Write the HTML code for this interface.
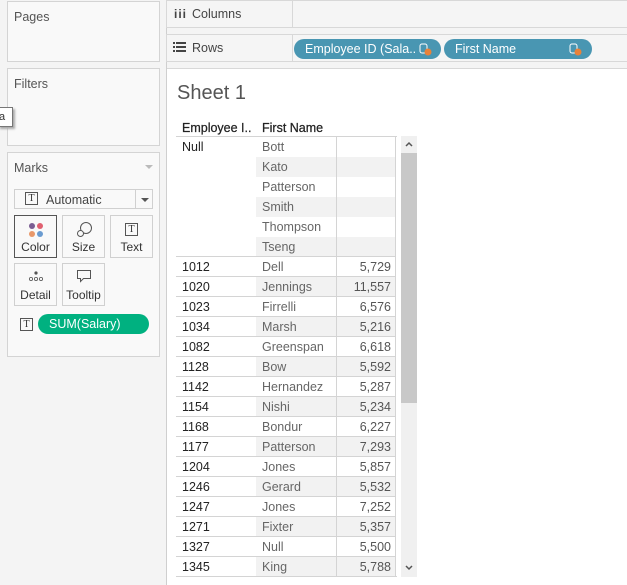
<!DOCTYPE html>
<html><head><style>
*{margin:0;padding:0;box-sizing:border-box}
body{width:627px;height:585px;background:#f4f4f4;font-family:"Liberation Sans",sans-serif;font-size:12px;color:#333;position:relative;overflow:hidden}
.abs{position:absolute}
.panel{position:absolute;left:7px;width:153px;background:#f9f9f9;border:1px solid #d4d4d4}
.ptitle{position:absolute;left:6px;top:8px;font-size:12.5px;color:#555}
.shelf{position:absolute;left:166px;width:461px;height:28px;background:#f5f5f5;border:1px solid #d8d8d8;border-right:none}
.shelf .sep{position:absolute;left:125px;top:0;bottom:0;border-left:1px solid #d8d8d8}
.pill{position:absolute;top:4px;height:20px;border-radius:10px;background:#4996b2;color:#fff;font-size:12.5px;line-height:20px;padding-left:11px}
.btn{position:absolute;width:43px;height:43px;border:1px solid #d0d0d0;background:#f9f9f9;text-align:center;font-size:12px;color:#333}
.btn .lbl{position:absolute;left:0;right:0;bottom:3px}
.ticon{display:inline-block;width:13px;height:13px;border:1px solid #555;font-size:10px;line-height:11px;text-align:center;font-family:"Liberation Serif",serif;color:#333}
.row{position:absolute;left:176px;width:220px;height:20px;font-size:12.5px}
.row div{position:absolute;top:0;height:20px;line-height:20px}
.c1{left:6px;width:74px;color:#222}
.c2{left:80px;width:80px;padding-left:6px;color:#666}
.c3{left:160px;width:60px;text-align:right;padding-right:4px;color:#555;border-left:1px solid #d4d4d4;border-right:1px solid #d4d4d4}
.sh{background:#f2f2f2}
.n{border-top:1px solid #d4d4d4}
.hd{font-size:12.5px;color:#222;-webkit-text-stroke:0.25px #222}
</style></head><body>
<div class="abs" style="left:166px;top:0;width:1px;height:585px;background:#cfcfcf"></div>
<div class="panel" style="top:1px;height:61px"><div class="ptitle">Pages</div></div>
<div class="panel" style="top:68px;height:78px"><div class="ptitle">Filters</div></div>
<div class="abs" style="left:-2px;top:107px;width:15px;height:20px;background:#fff;border:1px solid #777;box-shadow:2px 2px 2px #aaa;font-size:11px;line-height:18px;color:#333">a</div>
<div class="panel" style="top:152px;height:205px">
 <div class="ptitle">Marks</div>
 <div class="abs" style="right:6px;top:12px;width:0;height:0;border-left:4px solid transparent;border-right:4px solid transparent;border-top:4px solid #bbb"></div>
 <div class="abs" style="left:6px;top:36px;width:139px;height:20px;border:1px solid #d0d0d0;background:#f9f9f9">
  <span class="ticon abs" style="left:10px;top:2px">T</span>
  <span class="abs" style="left:31px;top:3px;color:#444;font-size:12.5px">Automatic</span>
  <div class="abs" style="left:120px;top:0;bottom:0;border-left:1px solid #d0d0d0"></div>
  <div class="abs" style="left:126px;top:8px;border-left:4px solid transparent;border-right:4px solid transparent;border-top:4px solid #555"></div>
 </div>
 <div class="btn" style="left:6px;top:62px;border-color:#555">
  <svg class="abs" style="left:13px;top:6px" width="16" height="16"><circle cx="4" cy="4" r="3" fill="#7b5e93"/><circle cx="12" cy="4" r="3" fill="#e06070"/><circle cx="4" cy="12" r="3" fill="#e8986a"/><circle cx="12" cy="12" r="3" fill="#6a9bd0"/></svg>
  <div class="lbl">Color</div></div>
 <div class="btn" style="left:54px;top:62px">
  <svg class="abs" style="left:13px;top:5px" width="17" height="17"><circle cx="10" cy="7" r="5.5" fill="none" stroke="#555"/><circle cx="4.5" cy="12.5" r="3" fill="#f9f9f9" stroke="#555"/></svg>
  <div class="lbl">Size</div></div>
 <div class="btn" style="left:102px;top:62px"><span class="ticon abs" style="left:14px;top:7px">T</span><div class="lbl">Text</div></div>
 <div class="btn" style="left:6px;top:110px">
  <svg class="abs" style="left:13px;top:6px" width="16" height="12"><circle cx="8" cy="3" r="1.6" fill="#555"/><circle cx="3" cy="9" r="1.6" fill="none" stroke="#555" stroke-width=".8"/><circle cx="8" cy="9" r="1.6" fill="none" stroke="#555" stroke-width=".8"/><circle cx="13" cy="9" r="1.6" fill="none" stroke="#555" stroke-width=".8"/></svg>
  <div class="lbl">Detail</div></div>
 <div class="btn" style="left:54px;top:110px">
  <svg class="abs" style="left:13px;top:5px" width="16" height="15"><path d="M1.5 1.5h13v8h-7l-3 3v-3h-3z" fill="none" stroke="#555"/></svg>
  <div class="lbl">Tooltip</div></div>
 <span class="ticon abs" style="left:12px;top:165px">T</span>
 <div class="abs" style="left:30px;top:161px;width:111px;height:20px;border-radius:10px;background:#00b180;color:#fff;font-size:12.5px;line-height:20px;padding-left:11px">SUM(Salary)</div>
</div>
<div class="shelf" style="top:0">
 <div class="abs" style="left:7px;top:6px;font-weight:bold;font-size:12px;letter-spacing:1px;color:#444">iii</div>
 <div class="abs" style="left:25px;top:6px;color:#444;font-size:12.5px">Columns</div><div class="sep"></div></div>
<div class="shelf" style="top:34px">
 <svg class="abs" style="left:6px;top:7px" width="13" height="11"><g fill="#444"><rect x="0" y="0" width="2" height="2"/><rect x="0" y="4" width="2" height="2"/><rect x="0" y="8" width="2" height="2"/><rect x="3" y="0" width="10" height="2"/><rect x="3" y="4" width="10" height="2"/><rect x="3" y="8" width="10" height="2"/></g></svg>
 <div class="abs" style="left:25px;top:6px;color:#444;font-size:12.5px">Rows</div><div class="sep"></div>
 <div class="pill" style="left:127px;width:147px">Employee ID (Sala..<svg class="abs" style="left:125px;top:4px" width="13" height="13"><rect x="1" y="1" width="7" height="9" rx="2" fill="none" stroke="#fff"/><circle cx="9" cy="9" r="3.5" fill="#e8823a"/></svg></div>
 <div class="pill" style="left:277px;width:148px">First Name<svg class="abs" style="left:125px;top:4px" width="13" height="13"><rect x="1" y="1" width="7" height="9" rx="2" fill="none" stroke="#fff"/><circle cx="9" cy="9" r="3.5" fill="#e8823a"/></svg></div>
</div>
<div class="abs" style="left:167px;top:68px;width:460px;height:517px;background:#fff;border-top:1px solid #d8d8d8"></div>
<div class="abs" style="left:177px;top:82px;font-size:20px;color:#555">Sheet 1</div>
<div class="abs hd" style="left:182px;top:121px">Employee I..</div>
<div class="abs hd" style="left:262px;top:121px">First Name</div>
<div class="abs" style="left:176px;top:136px;width:160px;height:1px;background:#d4d4d4"></div>
<div class="abs" style="left:336px;top:136px;width:61px;height:1px;background:#d4d4d4"></div>
<div class="row" style="top:137px"><div class="c1">Null</div><div class="c2">Bott</div><div class="c3"></div></div>
<div class="row" style="top:157px"><div class="c2 sh">Kato</div><div class="c3 sh"></div></div>
<div class="row" style="top:177px"><div class="c2">Patterson</div><div class="c3"></div></div>
<div class="row" style="top:197px"><div class="c2 sh">Smith</div><div class="c3 sh"></div></div>
<div class="row" style="top:217px"><div class="c2">Thompson</div><div class="c3"></div></div>
<div class="row" style="top:237px"><div class="c2 sh">Tseng</div><div class="c3 sh"></div></div>
<div class="row n" style="top:256px"><div class="c1">1012</div><div class="c2">Dell</div><div class="c3">5,729</div></div>
<div class="row n" style="top:276px"><div class="c1">1020</div><div class="c2 sh">Jennings</div><div class="c3 sh">11,557</div></div>
<div class="row n" style="top:296px"><div class="c1">1023</div><div class="c2">Firrelli</div><div class="c3">6,576</div></div>
<div class="row n" style="top:316px"><div class="c1">1034</div><div class="c2 sh">Marsh</div><div class="c3 sh">5,216</div></div>
<div class="row n" style="top:336px"><div class="c1">1082</div><div class="c2">Greenspan</div><div class="c3">6,618</div></div>
<div class="row n" style="top:356px"><div class="c1">1128</div><div class="c2 sh">Bow</div><div class="c3 sh">5,592</div></div>
<div class="row n" style="top:376px"><div class="c1">1142</div><div class="c2">Hernandez</div><div class="c3">5,287</div></div>
<div class="row n" style="top:396px"><div class="c1">1154</div><div class="c2 sh">Nishi</div><div class="c3 sh">5,234</div></div>
<div class="row n" style="top:416px"><div class="c1">1168</div><div class="c2">Bondur</div><div class="c3">6,227</div></div>
<div class="row n" style="top:436px"><div class="c1">1177</div><div class="c2 sh">Patterson</div><div class="c3 sh">7,293</div></div>
<div class="row n" style="top:456px"><div class="c1">1204</div><div class="c2">Jones</div><div class="c3">5,857</div></div>
<div class="row n" style="top:476px"><div class="c1">1246</div><div class="c2 sh">Gerard</div><div class="c3 sh">5,532</div></div>
<div class="row n" style="top:496px"><div class="c1">1247</div><div class="c2">Jones</div><div class="c3">7,252</div></div>
<div class="row n" style="top:516px"><div class="c1">1271</div><div class="c2 sh">Fixter</div><div class="c3 sh">5,357</div></div>
<div class="row n" style="top:536px"><div class="c1">1327</div><div class="c2">Null</div><div class="c3">5,500</div></div>
<div class="row n" style="top:556px"><div class="c1">1345</div><div class="c2 sh">King</div><div class="c3 sh">5,788</div></div>
<div class="abs" style="left:176px;top:576px;width:221px;height:1px;background:#d4d4d4"></div>
<div class="abs" style="left:401px;top:136px;width:16px;height:441px;background:#f0f0f0"></div>
<div class="abs" style="left:401px;top:153px;width:16px;height:250px;background:#c8c8c8"></div>
<svg class="abs" style="left:404px;top:140px" width="10" height="8"><path d="M2 6l3-3 3 3" fill="none" stroke="#555" stroke-width="1.5"/></svg>
<svg class="abs" style="left:404px;top:564px" width="10" height="8"><path d="M2 2l3 3 3-3" fill="none" stroke="#555" stroke-width="1.5"/></svg>
</body></html>
